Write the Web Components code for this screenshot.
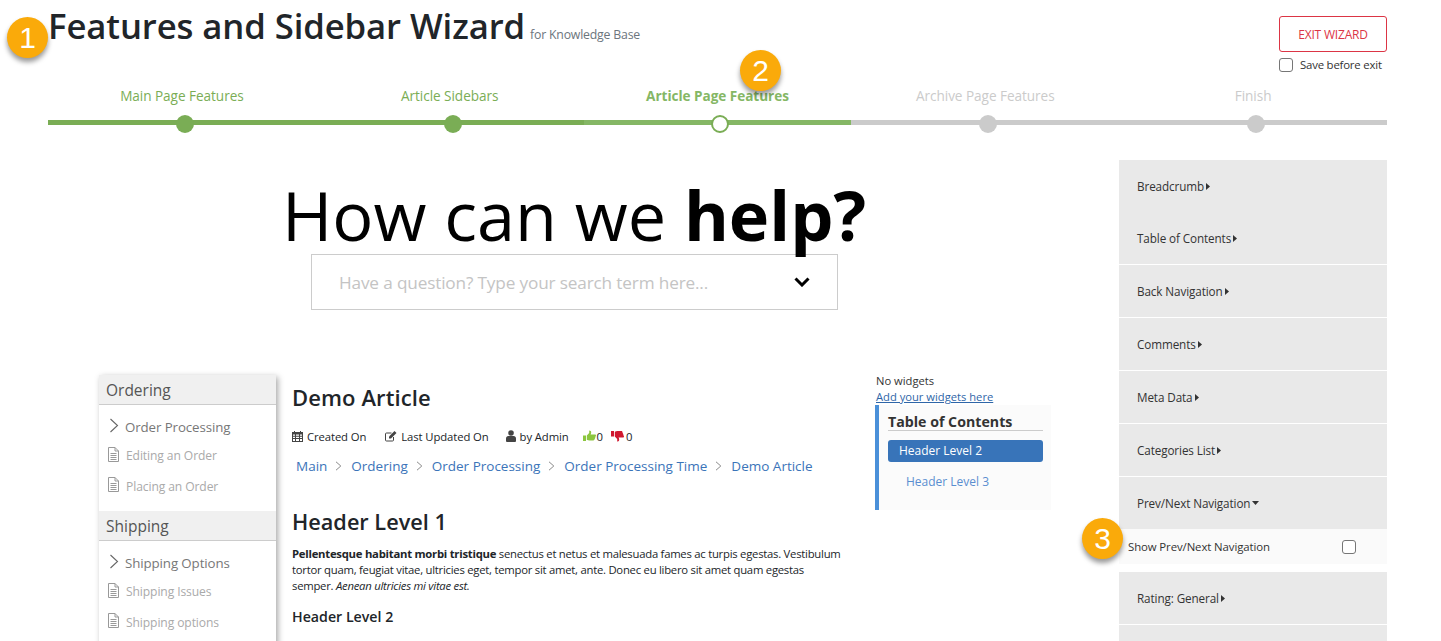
<!DOCTYPE html>
<html lang="en">
<head>
<meta charset="utf-8">
<title>Features and Sidebar Wizard</title>
<style>
  html, body { margin: 0; height: 641px; overflow: hidden; background: #fff; }
  body { font-family: "Open Sans", "Noto Sans", sans-serif; color: #212529; }
</style>
</head>
<body>
<wizard-top></wizard-top>
<wizard-steps></wizard-steps>
<wizard-body>
  <div slot="hero"><kb-search></kb-search></div>
  <kb-nav slot="nav"></kb-nav>
  <kb-article slot="article"></kb-article>
  <kb-toc slot="toc"></kb-toc>
  <feature-panel slot="panel"></feature-panel>
</wizard-body>
<call-out style="left:7px;top:17px">1</call-out>
<call-out style="left:740px;top:50px">2</call-out>
<call-out style="left:1082px;top:518px">3</call-out>

<script>
const ICONS = {
    calendar: `<svg width="11" height="12" viewBox="0 0 11 12"><path fill="#444" d="M0 2h2V1h1v1h5V1h1v1h2v10H0zM1 4.500v1.200h2V4.500zm3 0v1.200h3V4.500zm4 0v1.200h2V4.500zM1 6.700v1.200h2V6.700zm3 0v1.200h3V6.700zm4 0v1.200h2V6.700zM1 8.900v2.100h2V8.900zm3 0v2.100h3V8.900zm4 0v2.100h2V8.900z"/></svg>`,
    edit: `<svg width="13" height="12" viewBox="0 0 13 12"><path fill="none" stroke="#444" d="M9.500 7v3a1 1 0 0 1-1 1h-6a1 1 0 0 1-1-1V4a1 1 0 0 1 1-1h5"/><path fill="#444" d="M5 6.500 10.500 1 12.500 3 7 8.500H5z"/></svg>`,
    user: `<svg width="10" height="12" viewBox="0 0 10 12"><circle cx="5" cy="3" r="2.800" fill="#444"/><path fill="#444" d="M0 11V8.500C0 7 1 6 2.300 6h5.400C9 6 10 7 10 8.500V11a1 1 0 0 1-1 1H1a1 1 0 0 1-1-1z"/></svg>`,
    up: `<svg width="13" height="12" viewBox="0 0 13 12"><path fill="#8cc63f" d="M0 5.500h3V11H0zM3.800 5.500 6.200 3V.5c1.300 0 2 .8 2 1.800 0 .8-.3 1.500-.6 2.200H12c.6 0 1 .4 1 1 0 .4-.2.700-.5.900.2.600 0 1.100-.4 1.400.1.600-.1 1.100-.5 1.300 0 .9-.5 1.400-1.300 1.400H6.500c-1 0-1.800-.3-2.700-.8z"/></svg>`,
    down: `<svg width="13" height="12" viewBox="0 0 13 12"><path fill="#d0182f" d="M0 1h3v5.500H0zM3.800 6.500 6.200 9v2.500c1.300 0 2-.8 2-1.800 0-.8-.3-1.500-.6-2.200H12c.6 0 1-.4 1-1 0-.4-.2-.7-.5-.9.200-.6 0-1.100-.4-1.400.1-.6-.1-1.100-.5-1.300C11.600 1.500 11.100 1 10.300 1H6.500c-1 0-1.800.3-2.700.8z"/></svg>`,
    doc: `<svg width="11" height="15" viewBox="0 0 11 15"><path fill="none" stroke="#999" d="M.5.500h6.500l3.500 3.500v10.500H.5zM7 .5V4h3.500"/><path stroke="#999" d="M2.500 6.500h6M2.500 8.500h6M2.500 10.500h6M2.500 12.500h6"/></svg>`,
    chevron: `<svg width="10" height="15" viewBox="0 0 10 15"><path fill="none" stroke="#666" stroke-width="1.100" d="M1.500 1 8.500 7.500 1.500 14"/></svg>`,
    crumb: `<svg width="7" height="10" viewBox="0 0 7 10"><path fill="none" stroke="#8a8a8a" d="M1 .8 5.800 5 1 9.200"/></svg>`,
    caretRight: `<svg width="4" height="7" viewBox="0 0 4 7"><path fill="#333" d="M0 0 4 3.500 0 7z"/></svg>`,
    caretDown: `<svg width="7" height="4" viewBox="0 0 7 4"><path fill="#333" d="M0 0h7L3.500 4z"/></svg>`,
    searchDown: `<svg width="16" height="10" viewBox="0 0 16 10"><path fill="none" stroke="#000" stroke-width="3" d="M1.500 1.500 8 8l6.500-6.500"/></svg>`
};

class WizardTop extends HTMLElement {
    constructor() {
        super();
        this.attachShadow({ mode: "open" });
    }

    connectedCallback() {
        this.shadowRoot.innerHTML = `
    <style>
      :host { display: flex; justify-content: space-between; padding: 0 54px 0 48px; height: 85px; box-sizing: border-box; }
      .title { display: flex; align-items: baseline; height: 50px; padding-top: 1px; }
      h1 { margin: 0; font-size: 34.700px; font-weight: 600; line-height: 50px; letter-spacing: -.1px; color: #212529; }
      small { font-size: 12.300px; color: #6c757d; margin-left: 5px; letter-spacing: -.2px; }
      .exit { width: 108px; padding-top: 16px; }
      button {
        display: block; width: 108px; height: 36px; box-sizing: border-box;
        border: 1px solid #dc3545; border-radius: 3px; background: #fff; color: #dc3545;
        font: 12px "Open Sans", sans-serif; letter-spacing: -.2px; padding: 0;
      }
      label { display: flex; align-items: center; gap: 7px; margin-top: 5px; font-size: 11.400px; color: #333; white-space: nowrap; letter-spacing: -.2px; }
      input { appearance: none; margin: 0; width: 14px; height: 14px; border: 1px solid #767676; border-radius: 3px; background: #fff; flex: none; }
    </style>
    <div class="title"><h1>Features and Sidebar Wizard</h1><small>for Knowledge Base</small></div>
    <div class="exit">
      <button>EXIT WIZARD</button>
      <label><input type="checkbox">Save before exit</label>
    </div>`;
    }
}

class WizardSteps extends HTMLElement {
    constructor() {
        super();
        this.attachShadow({ mode: "open" });
    }

    connectedCallback() {
        const steps = [
            ["Main Page Features", "done"],
            ["Article Sidebars", "done"],
            ["Article Page Features", "current"],
            ["Archive Page Features", "todo"],
            ["Finish", "todo"]
        ];
        this.shadowRoot.innerHTML = `
    <style>
      :host { display: grid; grid-template-columns: repeat(5, 1fr); margin: 0 54px 0 48px; height: 75px; align-content: start; }
      .step { position: relative; text-align: center; font-size: 13.600px; line-height: 20px; letter-spacing: -.05px; }
      .label { height: 34px; padding-top: 1px; }
      .bar { height: 5px; background: currentColor; }
      .dot { position: absolute; left: 50%; top: 30px; width: 18px; height: 18px; margin-left: -6px; border-radius: 50%; background: currentColor; box-sizing: border-box; }
      .done { color: #7aad55; }
      .current { color: #85b765; font-weight: 700; }
      .current .dot { background: #fff; border: 2px solid #7aad55; }
      .todo { color: #cbcbcb; }
    </style>
    ${steps.map(([name, state]) => `
      <div class="step ${state}">
        <div class="label">${name}</div>
        <div class="bar"></div>
        <div class="dot"></div>
      </div>`).join("")}`;
    }
}

class WizardBody extends HTMLElement {
    constructor() {
        super();
        this.attachShadow({ mode: "open" });
    }

    connectedCallback() {
        this.shadowRoot.innerHTML = `
    <style>
      :host { display: grid; grid-template-columns: 1fr 268px; margin-right: 54px; }
      .preview { min-width: 0; }
      .hero { padding-top: 17px; height: 199px; box-sizing: border-box; text-align: center; }
      .hero h2 { margin: 0 0 1px 0; width: 1148px; font-size: 68.400px; line-height: 76px; font-weight: 400; color: #000; letter-spacing: 0; }
      .hero b { font-weight: 700; }
      .columns { display: flex; padding-left: 99px; margin-top: 16px; }
      ::slotted([slot="nav"]) { flex: none; }
    </style>
    <div class="preview">
      <div class="hero">
        <h2>How can we <b>help?</b></h2>
        <slot name="hero"></slot>
      </div>
      <div class="columns">
        <slot name="nav"></slot>
        <slot name="article"></slot>
        <slot name="toc"></slot>
      </div>
    </div>
    <slot name="panel"></slot>`;
    }
}

class KbSearch extends HTMLElement {
    constructor() {
        super();
        this.attachShadow({ mode: "open" });
    }

    connectedCallback() {
        this.shadowRoot.innerHTML = `
    <style>
      :host { display: flex; align-items: center; justify-content: space-between; box-sizing: border-box; width: 527px; height: 56px; margin: 0 0 0 311px; padding: 0 28px 0 27px; border: 1px solid #ccc; text-align: left; }
      span { font-size: 17.200px; color: #c4c4c4; letter-spacing: -.15px; }
      svg { display: block; margin-right: -1px; }
    </style>
    <span>Have a question? Type your search term here...</span>${ICONS.searchDown}`;
    }
}

class KbNav extends HTMLElement {
    constructor() {
        super();
        this.attachShadow({ mode: "open" });
    }

    connectedCallback() {
        const groups = [
            ["Ordering", "Order Processing", ["Editing an Order", "Placing an Order"]],
            ["Shipping", "Shipping Options", ["Shipping Issues", "Shipping options"]]
        ];
        this.shadowRoot.innerHTML = `
    <style>
      :host { display: block; width: 177px; height: 300px; box-shadow: 2px 2px 6px rgba(0,0,0,.35); background: #fff; }
      h3 { margin: 0; height: 30px; padding-left: 7px; box-sizing: border-box; background: #f0f0f0; border-bottom: 1px solid #ccc; font-size: 15.500px; line-height: 30px; font-weight: 400; color: #555; }
      ul { list-style: none; margin: 0; padding: 8.500px 0 0 9px; height: 106px; box-sizing: border-box; }
      li { display: flex; align-items: center; height: 30.500px; font-size: 12.100px; color: #aaa; gap: 7px; letter-spacing: -.1px; }
      li.top { font-size: 13.300px; color: #777; gap: 6px; height: 27px; padding-left: 1px; }
      svg { display: block; flex: none; margin-top: -3px; }
    </style>
    ${groups.map(([name, sub, pages]) => `
      <h3>${name}</h3>
      <ul>
        <li class="top">${ICONS.chevron}${sub}</li>
        ${pages.map(p => `<li>${ICONS.doc}${p}</li>`).join("")}
      </ul>`).join("")}`;
    }
}

class KbArticle extends HTMLElement {
    constructor() {
        super();
        this.attachShadow({ mode: "open" });
    }

    connectedCallback() {
        const crumbs = ["Main", "Ordering", "Order Processing", "Order Processing Time", "Demo Article"];
        this.shadowRoot.innerHTML = `
    <style>
      :host { display: block; width: 600px; flex: none; box-sizing: border-box; padding-left: 16px; color: #212529; }
      h1 { margin: 7px 0 0; font-size: 22px; line-height: 30px; font-weight: 600; letter-spacing: .1px; }
      .meta { display: flex; align-items: center; gap: 4px; height: 18px; margin-top: 15px; font-size: 11.300px; letter-spacing: -.1px; }
      .meta svg { display: block; flex: none; }
      .gap { margin-left: 14px; }
      .tight { margin-left: 13px; }
      .gap2 { margin-left: 10px; }
      .crumbs { display: flex; align-items: center; height: 20px; margin: 11px 0 0 4px; font-size: 13.500px; color: #3b74b9; }
      .crumbs svg { margin: 0 9px 0 8px; }
      h2 { margin: 31px 0 0; font-size: 21.700px; line-height: 30px; font-weight: 600; }
      p { margin: 9px 0 0; font-size: 11.300px; line-height: 16px; white-space: nowrap; letter-spacing: -.25px; }
      h3 { margin: 13px 0 0; font-size: 14.200px; line-height: 20px; font-weight: 600; }
    </style>
    <h1>Demo Article</h1>
    <div class="meta">
      ${ICONS.calendar}<span>Created On</span>
      <span class="gap">${ICONS.edit}</span><span>Last Updated On</span>
      <span class="tight">${ICONS.user}</span><span>by Admin</span>
      <span class="gap2">${ICONS.up}</span><span style="margin-left:-3px">0</span>
      <span style="margin-left:4px">${ICONS.down}</span><span style="margin-left:-2px">0</span>
    </div>
    <div class="crumbs">
      ${crumbs.map((c, i) => `<span>${c}</span>${i < crumbs.length - 1 ? ICONS.crumb : ""}`).join("")}
    </div>
    <h2>Header Level 1</h2>
    <p><b>Pellentesque habitant morbi tristique</b> senectus et netus et malesuada fames ac turpis egestas. Vestibulum<br>tortor quam, feugiat vitae, ultricies eget, tempor sit amet, ante. Donec eu libero sit amet quam egestas<br>semper. <i>Aenean ultricies mi vitae est.</i></p>
    <h3>Header Level 2</h3>`;
    }
}

class KbToc extends HTMLElement {
    constructor() {
        super();
        this.attachShadow({ mode: "open" });
    }

    connectedCallback() {
        this.shadowRoot.innerHTML = `
    <style>
      :host { display: block; width: 176px; margin-left: -1px; font-size: 11.200px; color: #333; }
      .note { padding-left: 1px; line-height: 16px; margin-top: -2px; }
      a { color: #2f66a8; text-decoration: underline; display: block; }
      .box { box-sizing: border-box; height: 105px; border-left: 4px solid #4a90d9; background: #fbfbfb; padding: 9px 8px 0 9px; }
      h4 { margin: 0; font-size: 14.200px; line-height: 16px; font-weight: 700; border-bottom: 1px solid #ccc; color: #333; white-space: nowrap; }
      .on { height: 22px; margin-top: 9px; padding-left: 11px; background: #3874b9; border-radius: 3px; color: #fff; font-size: 12px; line-height: 22px; }
      .sub { margin: 9px 0 0 18px; color: #5a8ed0; font-size: 12px; line-height: 22px; }
    </style>
    <div class="note">No widgets<a>Add your widgets here</a></div>
    <div class="box">
      <h4>Table of Contents</h4>
      <div class="on">Header Level 2</div>
      <div class="sub">Header Level 3</div>
    </div>`;
    }
}

class FeaturePanel extends HTMLElement {
    constructor() {
        super();
        this.attachShadow({ mode: "open" });
    }

    connectedCallback() {
        const before = ["Breadcrumb", "Table of Contents", "Back Navigation", "Comments", "Meta Data", "Categories List"];
        this.shadowRoot.innerHTML = `
    <style>
      :host { display: block; font-size: 11.700px; color: #333; letter-spacing: -.1px; }
      .item { box-sizing: border-box; height: 53px; padding-left: 18px; background: #e9e9e9; border-bottom: 1px solid #fff; display: flex; align-items: center; gap: 2px; font-weight: 500; }
      .item:first-of-type { height: 52px; border-bottom: 0; }
      .item svg { display: block; }
      .open { border-bottom: 0; height: 52px; }
      .option { display: flex; align-items: center; justify-content: space-between; box-sizing: border-box; height: 35px; padding: 0 31px 0 9px; background: #fafafa; margin-bottom: 8px; font-size: 11.400px; }
      input { appearance: none; margin: 0; width: 14px; height: 14px; border: 1px solid #767676; border-radius: 3px; background: #fff; }
    </style>
    ${before.map(b => `<div class="item">${b}${ICONS.caretRight}</div>`).join("")}
    <div class="item open">Prev/Next Navigation${ICONS.caretDown}</div>
    <div class="option"><span>Show Prev/Next Navigation</span><input type="checkbox"></div>
    <div class="item">Rating: General${ICONS.caretRight}</div>
    <div class="item"></div>`;
    }
}

class CallOut extends HTMLElement {
    constructor() {
        super();
        this.attachShadow({ mode: "open" });
    }

    connectedCallback() {
        this.shadowRoot.innerHTML = `
    <style>
      :host { position: absolute; display: flex; align-items: center; justify-content: center; width: 41px; height: 41px; border-radius: 50%; background: #faaa0a; color: #fff; font: 30px "Liberation Sans", sans-serif; box-shadow: 0 4px 5px rgba(0,0,0,.4); }
    </style>
    <slot></slot>`;
    }
}

customElements.define("wizard-top", WizardTop);
customElements.define("wizard-steps", WizardSteps);
customElements.define("wizard-body", WizardBody);
customElements.define("kb-search", KbSearch);
customElements.define("kb-nav", KbNav);
customElements.define("kb-article", KbArticle);
customElements.define("kb-toc", KbToc);
customElements.define("feature-panel", FeaturePanel);
customElements.define("call-out", CallOut);
</script>
</body>
</html>
